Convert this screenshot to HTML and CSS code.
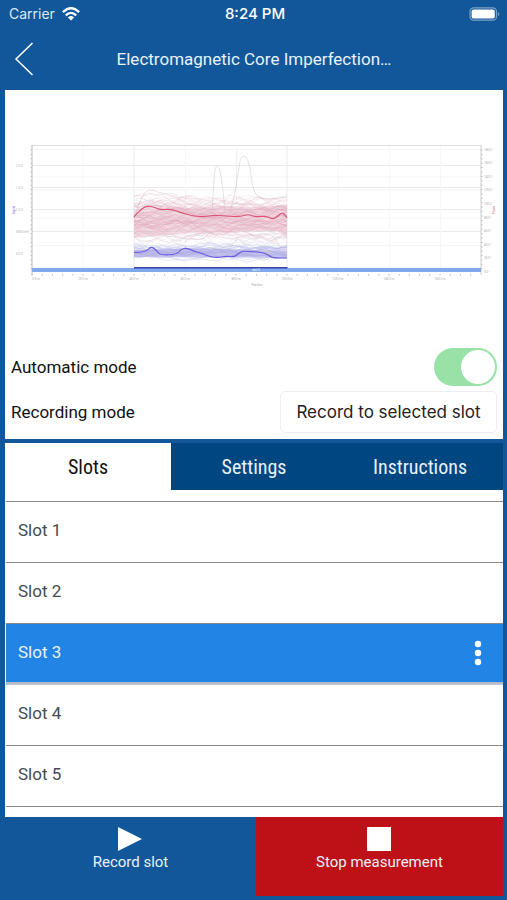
FILE: index.html
```html
<!DOCTYPE html>
<html lang="en">
<head>
<meta charset="utf-8">
<meta name="viewport" content="width=device-width, initial-scale=1">
<title>Electromagnetic Core Imperfection</title>
<link rel="stylesheet" href="styles.css">
</head>
<body>
<div class="app">
  <div class="status">
    <div class="carrier">Carrier
      <svg width="18" height="14" viewBox="0 0 18 14" aria-hidden="true"><g fill="none" stroke="#fff" stroke-width="2.3"><path d="M.9 5.1Q9-2.6 17.1 5.1"/><path d="M3.8 8.3Q9 3.5 14.2 8.3"/></g><path fill="#fff" d="M5.9 10.4Q9 7.8 12.1 10.4L9 13.6Z"/></svg>
    </div>
    <div class="time">8:24 PM</div>
    <svg class="battery" width="32" height="14" viewBox="0 0 32 14" aria-hidden="true"><rect x="1" y=".8" width="26.500" height="12.400" rx="3.800" fill="none" stroke="#7ea3ca" stroke-width="1.200"/><rect x="2.600" y="2.400" width="23.200" height="9.200" rx="2.200" fill="#fff"/><path d="M29 5Q31.600 7 29 9Z" fill="#7ea3ca"/></svg>
  </div>
  <header class="nav">
    <button class="back" aria-label="Back"><svg width="20" height="34" viewBox="0 0 20 34"><path d="M18.500 1 2 17 18.500 33" fill="none" stroke="#fff" stroke-width="1.500"/></svg></button>
    <h1>Electromagnetic Core Imperfection…</h1>
  </header>
  <main class="panel">
    <svg class="chart" id="chart" viewBox="5 90 498 254" role="img" aria-label="Measurement signal chart"></svg>
    <div class="field">
      <label for="auto">Automatic mode</label>
      <input class="switch" type="checkbox" role="switch" id="auto" checked>
    </div>
    <div class="field">
      <label for="mode">Recording mode</label>
      <select id="mode"><option>Record to selected slot</option></select>
    </div>
  </main>
  <section class="lower">
    <div class="tabs" role="tablist">
      <button role="tab" aria-selected="true" class="tab active">Slots</button>
      <button role="tab" aria-selected="false" class="tab">Settings</button>
      <button role="tab" aria-selected="false" class="tab">Instructions</button>
    </div>
    <ul class="slots">
      <li>Slot 1</li>
      <li>Slot 2</li>
      <li class="selected">Slot 3
        <button class="more" aria-label="Slot options"><svg width="8" height="26" viewBox="0 0 8 26" fill="#fff"><circle cx="4" cy="4" r="3.200"/><circle cx="4" cy="13" r="3.200"/><circle cx="4" cy="22" r="3.200"/></svg></button>
      </li>
      <li>Slot 4</li>
      <li>Slot 5</li>
    </ul>
  </section>
  <footer class="actions">
    <button class="action"><svg width="26" height="26" viewBox="0 0 26 26"><path fill="#fff" d="M1 1 25 13 1 25Z"/></svg>Record slot</button>
    <button class="action stop"><svg width="26" height="26" viewBox="0 0 26 26"><path fill="#fff" d="M1 1H25V25H1Z"/></svg>Stop measurement</button>
  </footer>
</div>
<script src="chart.js"></script>
</body>
</html>
```
FILE: styles.css
```css
* { box-sizing: border-box; }
body {
  margin: 0;
  background: #12579a;
  color: #111;
  font-family: Roboto, "Liberation Sans", sans-serif;
}
button { font: inherit; color: inherit; border: 0; padding: 0; background: none; }
svg { display: block; }
.app { min-height: 100vh; display: flex; flex-direction: column; padding: 0 4px 4px 5px; }
.status {
  height: 27px;
  display: grid;
  grid-template-columns: 1fr auto 1fr;
  align-items: center;
  padding: 0 2px 0 4px;
  color: #fff;
  font: 14px Inter, sans-serif;
}
.carrier { display: flex; align-items: center; gap: 7px; color: #dbe8f5; }
.time { font-size: 15px; font-weight: 500; }
.battery { justify-self: end; }
.nav {
  height: 63px;
  display: grid;
  grid-template-columns: 40px 1fr 40px;
  align-items: center;
  color: #e8f2fb;
}
.back { padding-left: 9px; }
h1 { margin: 0; font-size: 17px; font-weight: 400; text-align: center; }
.panel { background: #fff; padding-bottom: 5px; }
.chart { width: 100%; height: auto; }
.chart text { font: 3px Roboto, sans-serif; fill: #aaa; }
.chart .volt { fill: #6a5be8; }
.chart .phase { fill: #dc5c78; }
.chart .range { fill: #fff; }
.field { display: flex; align-items: center; justify-content: space-between; height: 45px; padding: 0 6px; font-size: 17px; }
.switch {
  appearance: none;
  margin: 0;
  width: 63px;
  height: 38px;
  border-radius: 19px;
  background: #98e2a8;
  display: flex;
  justify-content: flex-end;
  padding: 2px;
}
.switch::before { content: ""; width: 34px; height: 34px; border-radius: 50%; background: #fff; }
select {
  appearance: none;
  width: 217px;
  height: 42px;
  border: 1px solid #eceff2;
  border-radius: 5px;
  background: #fff;
  color: #222;
  font: 17px Inter, sans-serif;
  text-align: center;
  text-align-last: center;
}
.lower { flex: 1; margin-top: 4px; background: #fff; }
.tabs {
  display: grid;
  grid-template-columns: repeat(3, 1fr);
  height: 47px;
  background: #004680;
  color: #e8f2fb;
  font: 20px "Roboto Condensed", Roboto, sans-serif;
}
.tab.active { background: #fff; color: #111; }
.slots { list-style: none; margin: 11px 0 0 1px; padding: 0; border-bottom: 1px solid #888; }
.slots li {
  height: 61px;
  border-top: 1px solid #888;
  padding: 0 21px 4px 12px;
  display: flex;
  align-items: center;
  justify-content: space-between;
  font-size: 17px;
  color: #444b52;
}
.slots .selected { background: #2284e4; color: #e8f2fb; box-shadow: inset 0 -2px #b5bccb; }
.slots .selected + li { border-top-color: #c4c8d0; }
.more { padding-top: 2px; }
.actions { display: grid; grid-template-columns: 50.4% 1fr; height: 79px; color: #e8f2fb; font-size: 15px; }
.action { display: flex; flex-direction: column; align-items: center; padding-top: 9px; line-height: 20px; }
.stop { background: #bd1017; }
```
FILE: chart.js
```js
const svg = document.getElementById("chart");
const parts = [];
let seed = 11;
function rnd() {
  seed = (seed * 16807) % 2147483647;
  return seed / 2147483647;
}
function line(x1, y1, x2, y2, color) {
  parts.push(`<path d="M${x1} ${y1}L${x2} ${y2}" stroke="${color}" fill="none"/>`);
}
function curve(points, color, width, opacity) {
  let d = `M${points[0][0]} ${points[0][1]}`;
  for (let i = 1; i < points.length - 1; i++) {
    const [x, y] = points[i];
    const [nx, ny] = points[i + 1];
    d += `Q${x} ${y} ${(x + nx) / 2} ${(y + ny) / 2}`;
  }
  d += `L${points[points.length - 1].join(" ")}`;
  parts.push(`<path d="${d}" fill="none" stroke="${color}" stroke-width="${width}" opacity="${opacity}"/>`);
}
function label(x, y, text, anchor = "middle", extra = "") {
  parts.push(`<text x="${x}" y="${y}" text-anchor="${anchor}" ${extra}>${text}</text>`);
}

// Grid
for (const y of [165.5, 187.5, 209.5, 231.5]) line(32, y, 481, y, "#e9e9e9");
for (const y of [149.5, 177, 190, 218, 245.5]) line(32, y, 481, y, "#f5f5f5");
for (const x of [83, 185.5, 236.5, 338.5, 389.5, 440.5]) line(x, 146, x, 271, "#f7f7f7");
for (const x of [134, 287]) line(x, 146, x, 271, "#ebebeb");
line(32, 145.5, 481, 145.5, "#ddd");
line(32, 145, 32, 275, "#bbb");
line(481, 145, 481, 275, "#ccc");

// Recorded traces
function traces(count, low, high, jitter, color, opacity) {
  for (let n = 0; n < count; n++) {
    const base = low + rnd() * (high - low);
    let drift = 0;
    const points = [];
    for (let x = 134; x <= 287; x += 4.5) {
      drift = drift * 0.75 + (rnd() - 0.5) * jitter;
      points.push([x, +(base + drift).toFixed(1)]);
    }
    points.push([287, points[points.length - 1][1]]);
    curve(points, color, 0.7, opacity);
  }
}
parts.push('<path d="M134 219L142 209 160 206 190 208 220 206 255 207 287 205V239L278 231 190 233 160 236 134 238Z" fill="#ecc6d4" opacity=".6"/>');
traces(45, 207, 232, 8, "#dda3b8", 0.38);
traces(12, 198, 210, 8, "#dda9bb", 0.28);
traces(9, 231, 241, 9, "#d8b6c7", 0.3);
parts.push('<path d="M134 250H160L185 248 287 251V258L134 257Z" fill="#aaa7e2" opacity=".6"/>');
traces(24, 248, 258, 5, "#aaa9e3", 0.42);
traces(7, 243, 252, 9, "#aeb5dd", 0.3);
curve([[134, 218], [142, 194], [150, 189], [157, 192], [167, 194], [179, 199], [190, 194], [201, 203]], "#c99aad", 0.7, 0.4);
curve([[136, 214], [140, 198], [148, 192], [160, 196], [172, 192], [185, 200], [200, 198], [215, 204]], "#c99aad", 0.7, 0.3);
curve([[212, 212], [214, 176], [216, 165], [220, 168], [223, 190], [225, 211]], "#bbb", 0.7, 0.6);
curve([[230, 212], [235, 196], [238, 172], [241, 156], [246, 156], [250, 166], [253, 192], [262, 200], [287, 197]], "#bbb", 0.7, 0.6);
curve([[223, 204], [231, 193], [236, 191], [237, 166], [237, 150]], "#bbb", 0.6, 0.3);
curve([[134, 236], [140, 243], [150, 241], [165, 235], [180, 238], [205, 240], [209, 231], [216, 236], [232, 240], [240, 236], [262, 234], [272, 234], [280, 247], [287, 252]], "#c8aec4", 0.7, 0.5);
curve([[222, 256], [232, 245], [238, 238], [244, 243], [252, 255]], "#b4b8dc", 0.7, 0.5);
curve([[230, 258], [240, 260], [247, 263], [254, 260], [268, 257]], "#b4b8dc", 0.7, 0.5);

// Highlighted traces
curve([[134, 217], [139, 211], [146, 206], [154, 207], [161, 210], [171, 209], [182, 213], [193, 216], [204, 217], [214, 215], [226, 216], [240, 217], [248, 214], [255, 217], [266, 216], [272, 219], [276, 218], [282, 212], [285, 215], [287, 218]], "#d94f74", 1.2, 0.95);
curve([[134, 252.5], [146, 252.5], [151, 246], [157, 251], [160, 255], [177, 254.5], [181, 249], [187, 248], [193, 251], [201, 253], [210, 257], [219, 257.5], [226, 256], [235, 257], [241, 251], [248, 251.5], [260, 252], [267, 254], [272, 258], [287, 258]], "#6a5ae4", 1.2, 1);

// Range bar
parts.push('<rect x="32" y="268" width="449" height="4" fill="#80a9ed"/>');
parts.push('<rect x="134" y="267" width="153.5" height="1.5" fill="#353fae"/>');
label(256, 271.3, "slot 3", "middle", 'class="range"');

// Axes
for (let x = 32; x <= 472; x += 10.2) line(x, 274, x, 275.5, "#bbb");
for (let y = 150; y < 270; y += 4.4) {
  line(30.5, y, 32, y, "#bbb");
  line(481, y, 482.5, y, "#bbb");
}
[["2.0 V", 166.5], ["1.5 V", 188.5], ["1.0 V", 210.5], ["500.0 mV", 232.5], ["0.0 V", 255]].forEach(([t, y]) => label(16, y, t, "start"));
[["0.0 m", 36], ["20.0 m", 83], ["40.0 m", 134], ["60.0 m", 185], ["80.0 m", 236], ["100.0 m", 287], ["120.0 m", 338], ["140.0 m", 389], ["160.0 m", 440]].forEach(([t, x]) => label(x, 280, t));
for (let i = 0; i < 10; i++) label(484, 150.5 + i * 13.6, `${180 - i * 20}.0 °`, "start");
label(257, 286, "Position");
label(0, 0, "Signal", "middle", 'class="volt" transform="translate(15 210) rotate(-90)"');
label(0, 0, "Phase", "middle", 'class="phase" transform="translate(495 210) rotate(-90)"');

svg.innerHTML = parts.join("");
```
